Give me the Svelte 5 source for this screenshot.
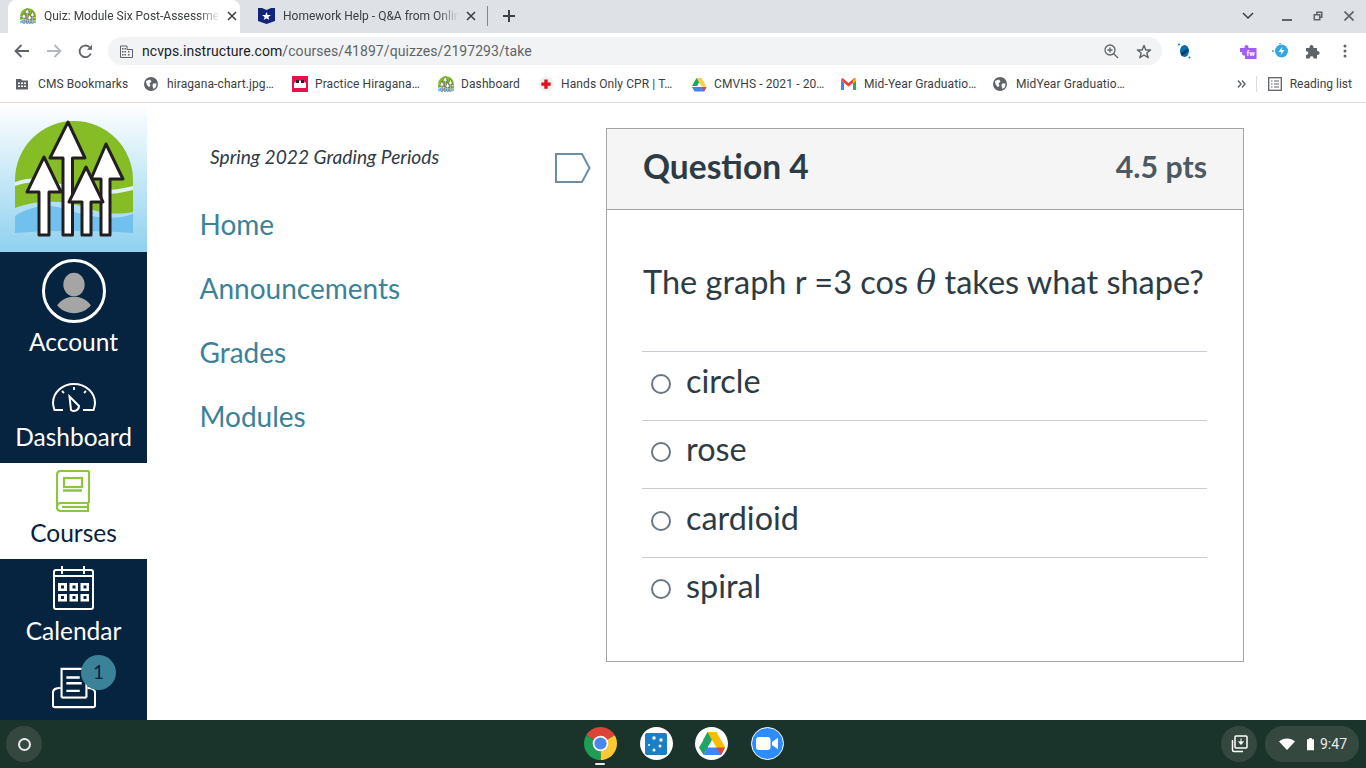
<script>
  const bookmarks = [
    { label: 'CMS Bookmarks', icon: 'folder', width: 129 },
    { label: 'hiragana-chart.jpg…', icon: 'globe', width: 148 },
    { label: 'Practice Hiragana…', icon: 'hira', width: 146 },
    { label: 'Dashboard', icon: 'logo', width: 100 },
    { label: 'Hands Only CPR | T…', icon: 'cross', width: 153 },
    { label: 'CMVHS - 2021 - 20…', icon: 'drive', width: 150 },
    { label: 'Mid-Year Graduatio…', icon: 'gmail', width: 152 },
    { label: 'MidYear Graduatio…', icon: 'globe', width: 150 }
  ];
  const links = ['Home', 'Announcements', 'Grades', 'Modules'];
  const answers = ['circle', 'rose', 'cardioid', 'spiral'];
</script>

{#snippet logo(size)}
  <svg class="logo-svg" width={size} height={size} viewBox="14 120 118 118">
    <path d="M14 180 A59 59 0 0 1 132 180 V212 C112 216 96 212 80 206 C60 200 34 200 14 208 Z" fill="#86bc25"/>
    <path d="M14 182 C30 176 42 178 60 184 C84 192 110 192 132 186 V190 C110 196 84 196 60 188 C42 182 30 180 14 186 Z" fill="#dff0f8"/>
    <path d="M14 216 C30 206 46 204 60 208 C84 216 110 222 132 214 V233 C92 230 52 230 14 233 Z" fill="#71c0ee"/>
    <g fill="#fff" stroke="#231f20" stroke-width="3" stroke-linejoin="round">
      <path d="M43 157 L60 192 H48 V235 H38 V192 H26 Z"/>
      <path d="M67 122 L84 158 H71.500 V235 H62 V158 H49 Z"/>
      <path d="M105 144 L122 179 H109 V235 H100 V179 H90 Z"/>
      <path d="M85 167 L102 202 H90 V235 H81 V202 H68 Z"/>
    </g>
  </svg>
{/snippet}

{#snippet bmIcon(icon)}
  {#if icon === 'folder'}
    <svg width="14" height="14" viewBox="0 0 14 14"><path d="M1 2h5l1.500 1.500H13V12.500H1Z" fill="#5f6368"/><g fill="#fff"><rect x="3" y="5.500" width="2" height="1.500"/><rect x="6" y="5.500" width="2" height="1.500"/><rect x="9" y="5.500" width="2" height="1.500"/><rect x="3" y="8.500" width="2" height="1.500"/><rect x="6" y="8.500" width="2" height="1.500"/><rect x="9" y="8.500" width="2" height="1.500"/></g></svg>
  {:else if icon === 'globe'}
    <svg width="14" height="14" viewBox="0 0 14 14"><circle cx="7" cy="7" r="7" fill="#5f6368"/><path d="M2 4 L6 2.500 L7.500 4.500 L5.500 6.500 L6.500 9 L4.500 10 L2.500 7Z M9 6.500 L12.500 6.500 L12 10 L9.500 12 L8.500 9Z" fill="#fff"/></svg>
  {:else if icon === 'hira'}
    <svg width="16" height="16" viewBox="0 0 16 16"><rect width="16" height="16" fill="#e8114a"/><path d="M2 7 Q8 2 14 7 V12 H2Z" fill="#fff"/><rect x="4" y="4" width="3" height="3" fill="#223"/><rect x="9" y="4" width="3" height="3" fill="#223"/></svg>
  {:else if icon === 'logo'}
    {@render logo(16)}
  {:else if icon === 'cross'}
    <svg width="16" height="16" viewBox="0 0 16 16"><circle cx="8" cy="8" r="7.500" fill="#f1f1f1"/><path d="M6.300 3.500h3.400v3h3v3.200h-3v3h-3.400v-3h-3V6.500h3Z" fill="#e0121b"/></svg>
  {:else if icon === 'drive'}
    <svg width="16" height="15" viewBox="0 0 16 15"><path d="M5.500 1h5L8 5.500 6 9H1Z" fill="#1fa463"/><path d="M5.500 1h5l5 8.500h-5Z" fill="#ffcf48"/><path d="M1 10h14.500l-2.500 4.500H3.500Z" fill="#4285f4"/><path d="M15.500 10 13 14.500 10.500 10Z" fill="#ea4335"/></svg>
  {:else if icon === 'gmail'}
    <svg width="15" height="12" viewBox="0 0 15 12"><path d="M0 1.500 V12 H3 V5Z" fill="#4285f4"/><path d="M15 1.500 V12 H12 V5Z" fill="#34a853"/><path d="M0 1 L1.500 0 L7.500 5 L13.500 0 L15 1 L12 5 L7.500 8.500 L3 5Z" fill="#ea4335"/><path d="M12 2 L15 0.500 V3 L12 5.500Z" fill="#fbbc04"/></svg>
  {/if}
{/snippet}

<div class="screen">
  <header class="chrome">
    <div class="tabstrip">
      <div class="tab active">
        <span class="fav">{@render logo(16)}</span>
        <span class="tab-title">Quiz: Module Six Post-Assessme</span>
        <svg class="close" width="10" height="10" viewBox="0 0 10 10"><path d="M1 1 9 9M9 1 1 9" stroke="#3c4043" stroke-width="1.600"/></svg>
      </div>
      <div class="tab other">
        <svg class="fav" width="17" height="16" viewBox="0 0 17 16"><path d="M0 0 H4 L8.500 2 L13 0 H17 V13 L8.500 16 L0 13Z" fill="#12237a"/><path d="M8.500 4 9.700 7H13L10.400 9 11.300 12 8.500 10.300 5.700 12 6.600 9 4 7H7.300Z" fill="#fff"/></svg>
        <span class="tab-title">Homework Help - Q&amp;A from Onlin</span>
        <svg class="close" width="10" height="10" viewBox="0 0 10 10"><path d="M1 1 9 9M9 1 1 9" stroke="#3c4043" stroke-width="1.600"/></svg>
      </div>
      <div class="tab-sep"></div>
      <svg class="plus" width="12" height="12" viewBox="0 0 12 12"><path d="M6 0V12M0 6H12" stroke="#3c4043" stroke-width="2"/></svg>
      <div class="win">
        <svg width="12" height="8" viewBox="0 0 12 8"><path d="M1 1 6 6 11 1" fill="none" stroke="#3c4043" stroke-width="1.500"/></svg>
        <svg class="w-min" width="10" height="10" viewBox="0 0 10 10"><rect y="8" width="10" height="2" fill="#5f6368"/></svg>
        <svg width="10" height="10" viewBox="0 0 10 10"><path d="M3 .5H9.500V7H7.500V9.500H.5V3H3Z M4.500 2V3H7.500V5.500H8V2Z M2 4.500V8H6V4.500Z" fill="#5f6368" fill-rule="evenodd"/></svg>
        <svg width="10" height="10" viewBox="0 0 10 10"><path d="M.5.5 9.500 9.500M9.500.5.5 9.500" stroke="#5f6368" stroke-width="1.700"/></svg>
      </div>
    </div>

    <div class="toolbar">
      <svg class="nav-ic" width="16" height="14" viewBox="0 0 16 14"><path d="M15 7H2M7.500 1 1.500 7l6 6" fill="none" stroke="#5f6368" stroke-width="1.800"/></svg>
      <svg class="nav-ic" width="16" height="14" viewBox="0 0 16 14"><path d="M1 7H14M8.500 1l6 6-6 6" fill="none" stroke="#b4b7bb" stroke-width="1.800"/></svg>
      <svg class="nav-ic" width="15" height="15" viewBox="0 0 15 15"><path d="M12.800 9.500A5.800 5.800 0 1 1 11.500 3.200" fill="none" stroke="#5f6368" stroke-width="1.800"/><path d="M9 5.800H14V.8Z" fill="#5f6368"/></svg>
      <div class="omnibox">
        <svg width="13" height="13" viewBox="0 0 13 13"><path d="M.5 1H7V4.500H12.500V12.500H.5Z" fill="none" stroke="#5f6368" stroke-width="1"/><path d="M2 3h1.500v1.500H2zM4.500 3H6v1.500H4.500zM2 6h1.500v1.500H2zM4.500 6H6v1.500H4.500zM8 6h1.500v1.500H8zM2 9h1.500v1.500H2zM4.500 9H6v1.500H4.500zM8 9h1.500v1.500H8z" fill="#5f6368"/></svg>
        <span class="url"><b>ncvps.instructure.com</b>/courses/41897/quizzes/2197293/take</span>
        <svg class="zoom-ic" width="15" height="15" viewBox="0 0 15 15"><circle cx="6" cy="6" r="5" fill="none" stroke="#5f6368" stroke-width="1.300"/><path d="M9.500 9.500 14 14M6 3.500v5M3.500 6h5" stroke="#5f6368" stroke-width="1.300"/></svg>
        <svg class="star-ic" width="16" height="15" viewBox="0 0 16 15"><path d="M8 1.500 9.800 6H14.600L10.800 9 12.200 13.700 8 11 3.800 13.700 5.200 9 1.400 6H6.200Z" fill="none" stroke="#5f6368" stroke-width="1.400" stroke-linejoin="round"/></svg>
      </div>
      <svg class="ext e1" width="13" height="16" viewBox="0 0 13 16"><ellipse cx="6.500" cy="8" rx="4.500" ry="6" fill="#0b6db0"/><path d="M2.500 10 10 5.500 10.500 8 4 13Z" fill="#0a3f6a"/><circle cx="1" cy="1.500" r="1" fill="#1078b8"/><circle cx="11.500" cy="14.500" r="1" fill="#1078b8"/></svg>
      <svg class="ext e2" width="17" height="16" viewBox="0 0 17 16"><path d="M0 5H4.500C4 1 9 1 8.500 5H16.500V16H5V12.500C1 12.500 1 8.500 4 9H0Z" fill="#a25ef0"/><text x="6.500" y="13" font-size="7.500" font-family="Roboto" font-weight="700" fill="#fff">fw</text></svg>
      <svg class="ext e3" width="18" height="16" viewBox="0 0 18 16"><circle cx="9.500" cy="8" r="6.500" fill="#35a7e0"/><circle cx="1" cy="8" r="1" fill="#35a7e0"/><circle cx="8" cy="0.800" r="0.800" fill="#35a7e0"/><path d="M10.500 3.500 6.500 9H9.500L8.500 12.500 12.500 7H9.500Z" fill="#fff"/></svg>
      <svg class="ext e4" width="15" height="15" viewBox="0 0 15 15"><path d="M1 4H4.500C4 0 9 0 8.500 4H12V7C15.500 6.800 15.500 11.500 12 11V14.500H8.500C8.800 11.500 4.500 11.500 4.800 14.500H1V11C4 11.200 4 7 1 7.300Z" fill="#5f6368"/></svg>
      <svg class="ext e5" width="4" height="14" viewBox="0 0 4 14"><circle cx="2" cy="2" r="1.500" fill="#5f6368"/><circle cx="2" cy="7" r="1.500" fill="#5f6368"/><circle cx="2" cy="12" r="1.500" fill="#5f6368"/></svg>
    </div>

    <div class="bookmarks">
      {#each bookmarks as b}
        <div class="bm" style:width="{b.width}px">
          <span class="bm-ic">{@render bmIcon(b.icon)}</span>
          <span>{b.label}</span>
        </div>
      {/each}
      <div class="bm-right">
        <svg class="more" width="9" height="8" viewBox="0 0 9 8"><path d="M1 .5 4 4 1 7.500M5 .5 8 4 5 7.500" fill="none" stroke="#5f6368" stroke-width="1.400"/></svg>
        <span class="bm-sep"></span>
        <svg width="14" height="14" viewBox="0 0 14 14"><rect x=".7" y=".7" width="12.600" height="12.600" fill="none" stroke="#5f6368" stroke-width="1.300"/><path d="M3 4h1.500M6 4h5M3 7h1.500M6 7h5M3 10h1.500M6 10h5" stroke="#5f6368" stroke-width="1.200"/></svg>
        <span class="rl">Reading list</span>
      </div>
    </div>
  </header>

  <div class="page">
    <nav class="side">
      <div class="brand">{@render logo(118)}</div>
      <div class="gitem account">
        <div class="avatar">
          <svg width="76" height="76" viewBox="0 0 76 76"><defs><clipPath id="av"><circle cx="38" cy="38" r="29"/></clipPath></defs><g clip-path="url(#av)" fill="#a5a5a5"><ellipse cx="38" cy="29.500" rx="14" ry="15.500"/><ellipse cx="38" cy="69.500" rx="26" ry="24"/></g></svg>
        </div>
        <span>Account</span>
      </div>
      <div class="gitem dash">
        <svg width="44" height="30" viewBox="0 0 44 30"><g fill="none" stroke="#fff" stroke-width="2"><path d="M11 27H2.500C1.500 24 1 22 1 20A21 19 0 0 1 43 20C43 22 42.500 24 41.500 27H31"/><path d="M17.500 13.500 L27 23 A5 5 0 0 1 19 27 Z"/><path d="M22 4V7M10 8l2 2M34 8l-2 2" stroke-width="1.800"/></g></svg>
        <span>Dashboard</span>
      </div>
      <div class="gitem courses">
        <svg width="34" height="42" viewBox="0 0 34 42"><g fill="none" stroke="#8cc63f" stroke-width="2.200"><path d="M33 1H5C2.500 1 1 2.500 1 5V37C1 39.500 2.500 41 5 41H32V33H5C2.500 33 1 34.500 1 37"/><path d="M33 1V33"/><rect x="8" y="8" width="18" height="9"/><path d="M7 20.500H26" stroke-width="2.500"/><path d="M6 37H32"/></g></svg>
        <span>Courses</span>
      </div>
      <div class="gitem cal">
        <svg width="41" height="44" viewBox="0 0 41 44"><g fill="none" stroke="#fff" stroke-width="2"><rect x="1" y="4" width="39" height="39" rx="2"/><path d="M1 10H40M9 0V8M31 0V8"/></g><g fill="#fff"><path d="M5 17h9v8H5zM16.500 17h8.500v8h-8.500zM27.500 17h8.500v8h-8.500zM5 28h9v7.500H5zM16.500 28h8.500v7.500h-8.500zM27.500 28h8.500v7.500h-8.500z"/></g><g fill="#06243f"><rect x="8" y="19.500" width="3" height="3"/><rect x="19.500" y="19.500" width="3" height="3"/><rect x="30.500" y="19.500" width="3" height="3"/><rect x="8" y="30" width="3" height="3"/><rect x="19.500" y="30" width="3" height="3"/><rect x="30.500" y="30" width="3" height="3"/></g></svg>
        <span>Calendar</span>
      </div>
      <div class="gitem inbox">
        <svg width="44" height="42" viewBox="0 0 46 42"><g fill="none" stroke="#fff" stroke-width="2.200"><path d="M9 21C4 21 1 22 1 26V39C1 40 2 41 3 41H43C44 41 45 40 45 39V26C45 22 42 21 37 21"/><path d="M10 31V1H36V31"/><path d="M10 31H36"/></g><path d="M15 10H29M15 16H31M15 24H29" stroke="#fff" stroke-width="2.500"/></svg>
        <span class="badge">1</span>
      </div>
    </nav>

    <aside class="subnav">
      <p class="period">Spring 2022 Grading Periods</p>
      <ul>
        {#each links as l}<li>{l}</li>{/each}
      </ul>
    </aside>

    <div class="flag">
      <svg width="36" height="30" viewBox="0 0 36 30"><path d="M1 1H27L34.500 15 27 29H1Z" fill="none" stroke="#6b8ea6" stroke-width="2"/></svg>
    </div>

    <section class="card">
      <div class="card-head">
        <h2>Question 4</h2>
        <span class="pts">4.5 pts</span>
      </div>
      <div class="card-body">
        <p class="q">The graph r =3 cos <i class="theta">θ</i> takes what shape?</p>
        <div class="answers">
          {#each answers as a}
            <label class="answer"><span class="radio"></span><span>{a}</span></label>
          {/each}
        </div>
      </div>
    </section>
  </div>

  <footer class="shelf">
    <div class="launcher"><span class="ring"></span></div>
    <div class="apps">
      <div class="app chrome-app">
        <svg width="33" height="33" viewBox="0 0 34 34">
          <path d="M17 17 L2.300 8.500 A17 17 0 0 1 31.700 8.500Z" fill="#db4437"/>
          <path d="M17 17 L31.700 8.500 A17 17 0 0 1 17 34Z" fill="#fcc934"/>
          <path d="M17 17 L17 34 A17 17 0 0 1 2.300 8.500Z" fill="#1e9e55"/>
          <circle cx="17" cy="17" r="8" fill="#fff"/><circle cx="17" cy="17" r="6.300" fill="#4b86ee"/>
        </svg>
        <span class="dot"></span>
      </div>
      <div class="app round">
        <svg width="22" height="22" viewBox="0 0 22 22"><rect width="22" height="22" rx="2" fill="#1a7fc7"/><g fill="#fff"><circle cx="9" cy="5" r="1.700"/><circle cx="16" cy="7" r="1.700"/><circle cx="4" cy="12" r="1"/><circle cx="15" cy="13" r="1.500"/><circle cx="9" cy="17" r="1.500"/></g></svg>
      </div>
      <div class="app round">
        <svg width="26" height="23" viewBox="0 0 26 23"><path d="M8.500 0h9L8.500 15.500 4 8Z" fill="#1fa463"/><path d="M8.500 0h9L26 15H17Z" fill="#fbbc04"/><path d="M4.500 23 8.500 15.500H26L22 23Z" fill="#4285f4"/><path d="M0 15.500 4.500 8 9 15.500 4.500 23Z" fill="#1fa463"/><path d="M26 15.500 22 23 17.500 15.500Z" fill="#ea4335"/></svg>
      </div>
      <div class="app zoom-app">
        <svg width="22" height="13" viewBox="0 0 22 13"><rect width="14.500" height="13" rx="3" fill="#fff"/><path d="M16 5 22 .8V12.200L16 8Z" fill="#fff"/></svg>
      </div>
    </div>
    <div class="tray">
      <div class="holding">
        <svg width="18" height="18" viewBox="0 0 18 18"><g fill="none" stroke="#fff" stroke-width="1.500"><rect x="5" y="1" width="12" height="12" rx="1"/><path d="M2.500 5V15C2.500 16 3 16.500 4 16.500H13"/></g><path d="M11 3.500V8M8.500 6.500 11 9.500 13.500 6.500" fill="#fff" stroke="#fff"/></svg>
      </div>
      <div class="status">
        <svg width="16" height="12" viewBox="0 0 16 12"><path d="M0 3.500C4 -.5 12 -.5 16 3.500L8 12Z" fill="#fff"/></svg>
        <svg class="batt" width="7" height="14" viewBox="0 0 8 14"><path d="M2.500 0h3v1.500H8V14H0V1.500H2.500Z" fill="#fff"/></svg>
        <span>9:47</span>
      </div>
    </div>
  </footer>
</div>

<style>
  :global(body) { margin: 0; background: #fff; overflow: hidden; }
  .screen { width: 1366px; height: 768px; display: flex; flex-direction: column; overflow: hidden; font-family: Lato, sans-serif; }

  .chrome { height: 103px; flex: none; font-family: Roboto, sans-serif; border-bottom: 1px solid #dadce0; box-sizing: border-box; }
  .tabstrip { height: 33px; background: #dee1e6; display: flex; align-items: center; padding-left: 8px; position: relative; }
  .tab { height: 33px; display: flex; align-items: center; box-sizing: border-box; font-size: 12px; color: #3c4043; padding-bottom: 2px; flex: none; }
  .tab.active { width: 232px; background: #fff; border-radius: 8px 8px 0 0; padding-left: 12px; }
  .tab.other { width: 247px; padding-left: 18px; }
  .fav { flex: none; display: flex; }
  .tab-title { margin-left: 8px; width: 176px; overflow: hidden; white-space: nowrap; flex: none; mask-image: linear-gradient(to right, #000 88%, transparent); -webkit-mask-image: linear-gradient(to right, #000 88%, transparent); }
  .close { margin-left: 7px; flex: none; }
  .tab-sep { width: 1px; height: 20px; background: #80868b; margin-bottom: 2px; flex: none; }
  .plus { margin-left: 15px; margin-bottom: 2px; flex: none; }
  .win { margin-left: auto; display: flex; align-items: center; gap: 21px; padding-right: 12px; padding-bottom: 2px; }
  .win svg:first-child { margin-right: 7px; }

  .toolbar { height: 33px; box-sizing: border-box; padding-top: 3px; display: flex; align-items: center; background: #fff; padding-left: 14px; }
  .nav-ic { flex: none; margin-right: 16px; }
  .nav-ic:nth-child(3) { margin-right: 15px; }
  .omnibox { width: 1054px; height: 28px; background: #f1f3f4; border-radius: 14px; display: flex; align-items: center; padding-left: 12px; box-sizing: border-box; flex: none; }
  .url { margin-left: 9px; font-size: 14px; color: #5f6368; letter-spacing: 0.065px; }
  .url b { font-weight: 400; color: #202124; }
  .zoom-ic { margin-left: auto; }
  .star-ic { margin-left: 17px; margin-right: 10px; }
  .ext { flex: none; }
  .e1 { margin-left: 16px; }
  .e2 { margin-left: 49px; }
  .e3 { margin-left: 15px; }
  .e4 { margin-left: 15px; }
  .e5 { margin-left: 23px; }

  .bookmarks { height: 36px; display: flex; align-items: center; padding-left: 15px; font-size: 12px; color: #3c4043; background: #fff; }
  .bm { display: flex; align-items: center; flex: none; white-space: nowrap; letter-spacing: 0.1px; }
  .bm-ic { width: 23px; display: flex; align-items: center; flex: none; }
  .bm-right { margin-left: auto; display: flex; align-items: center; padding-right: 14px; }
  .more { margin-right: 10px; margin-left: -1px; }
  .bm-sep { width: 1px; height: 16px; background: #dadce0; margin-right: 11px; }
  .rl { margin-left: 8px; }

  .page { height: 617px; display: flex; flex: none; overflow: hidden; }
  .side { width: 147px; flex: none; background: #06243f; display: flex; flex-direction: column; color: #fff; }
  .brand { height: 149px; flex: none; background: linear-gradient(#fff 0%, #8fd1ef 100%); display: flex; justify-content: center; align-items: flex-start; padding-top: 17px; box-sizing: border-box; }
  .logo-svg { display: block; overflow: visible; }
  .gitem { display: flex; flex-direction: column; align-items: center; font-size: 24.500px; line-height: 30px; flex: none; position: relative; }
  .account { height: 118px; padding-top: 7px; box-sizing: border-box; }
  .avatar { height: 64px; width: 64px; border-radius: 50%; border: 3px solid #fff; box-sizing: border-box; display: flex; align-items: center; justify-content: center; overflow: hidden; margin-bottom: 4px; }
  .dash { height: 93px; padding-top: 13px; box-sizing: border-box; }
  .dash span { margin-top: 9px; }
  .courses { height: 96px; background: #fff; color: #06243f; padding-top: 7px; box-sizing: border-box; }
  .courses svg { margin-left: -1px; }
  .courses span { margin-top: 6px; }
  .cal { height: 96px; padding-top: 7px; box-sizing: border-box; }
  .cal span { margin-top: 6px; }
  .inbox { height: 65px; padding-top: 12px; box-sizing: border-box; }
  .badge { position: absolute; left: 81px; top: 0; width: 35px; height: 35px; border-radius: 50%; background: #3b8198; color: #06243f; font-size: 19px; line-height: 33px; text-align: center; }

  .subnav { width: 408px; flex: none; box-sizing: border-box; padding: 40px 0 0 53px; }
  .period { margin: 0 0 0 10px; font-style: italic; font-size: 19.200px; line-height: 27px; color: #2d3b45; }
  .subnav ul { list-style: none; margin: 22px 0 0; padding: 0; }
  .subnav li { font-size: 28px; line-height: 64px; color: #3b8298; margin-left: -0.500px; }

  .flag { width: 51px; flex: none; padding-top: 50px; box-sizing: border-box; }
  .flag svg { display: block; }

  .card { width: 638px; height: 534px; margin-top: 25px; flex: none; box-sizing: border-box; border: 1px solid #a5a5a5; color: #2d3b45; }
  .card-head { height: 81px; box-sizing: border-box; border-bottom: 1px solid #a5a5a5; background: #f5f5f5; display: flex; align-items: center; justify-content: space-between; padding: 0 36px 7px; }
  .card-head h2 { margin: 0; font-size: 33.500px; font-weight: 700; line-height: 74px; }
  .pts { font-size: 30.300px; font-weight: 700; color: #4d5a63; }
  .card-body { padding: 0 36px; }
  .q { margin: 49px 0 0; font-size: 32.500px; line-height: 46px; white-space: nowrap; }
  .theta { font-family: "DejaVu Serif", serif; font-size: 33px; }
  .answers { margin: 45px 0 0 -1px; }
  .answer { display: flex; align-items: center; height: 68.500px; box-sizing: border-box; border-top: 1px solid #c7cdd1; font-size: 32.400px; line-height: 56px; padding: 0 0 10px 9px; }
  .radio { width: 20px; height: 20px; box-sizing: border-box; border-radius: 50%; border: 2px solid #6b7780; margin-right: 15px; margin-top: 6px; flex: none; background: #fff; }

  .shelf { height: 48px; flex: none; background: #1a332b; display: flex; align-items: center; position: relative; }
  .launcher { width: 36px; height: 36px; border-radius: 50%; background: #35483f; margin-left: 6px; display: flex; align-items: center; justify-content: center; }
  .ring { width: 13px; height: 13px; border: 2px solid #e8eaed; border-radius: 50%; box-sizing: border-box; }
  .apps { position: absolute; left: 584px; top: 7px; display: flex; align-items: center; gap: 22.500px; }
  .app { width: 33px; height: 33px; flex: none; display: flex; align-items: center; justify-content: center; position: relative; }
  .round { background: #fff; border-radius: 50%; }
  .zoom-app { background: #2d8cff; border-radius: 50%; border: 1px solid #fff; box-sizing: border-box; }
  .dot { position: absolute; left: 11px; top: 36px; width: 10px; height: 2px; background: #e8eaed; border-radius: 1px; }
  .tray { margin-left: auto; display: flex; align-items: center; gap: 8px; padding-right: 7px; }
  .holding { width: 36px; height: 36px; border-radius: 50%; background: #35483f; display: flex; align-items: center; justify-content: center; }
  .status { height: 36px; width: 94px; box-sizing: border-box; border-radius: 18px; background: #35483f; display: flex; align-items: center; padding-left: 14px; font-family: Roboto, sans-serif; font-size: 14px; color: #e8eaed; }
  .batt { margin: 0 6px 0 12px; }
</style>
